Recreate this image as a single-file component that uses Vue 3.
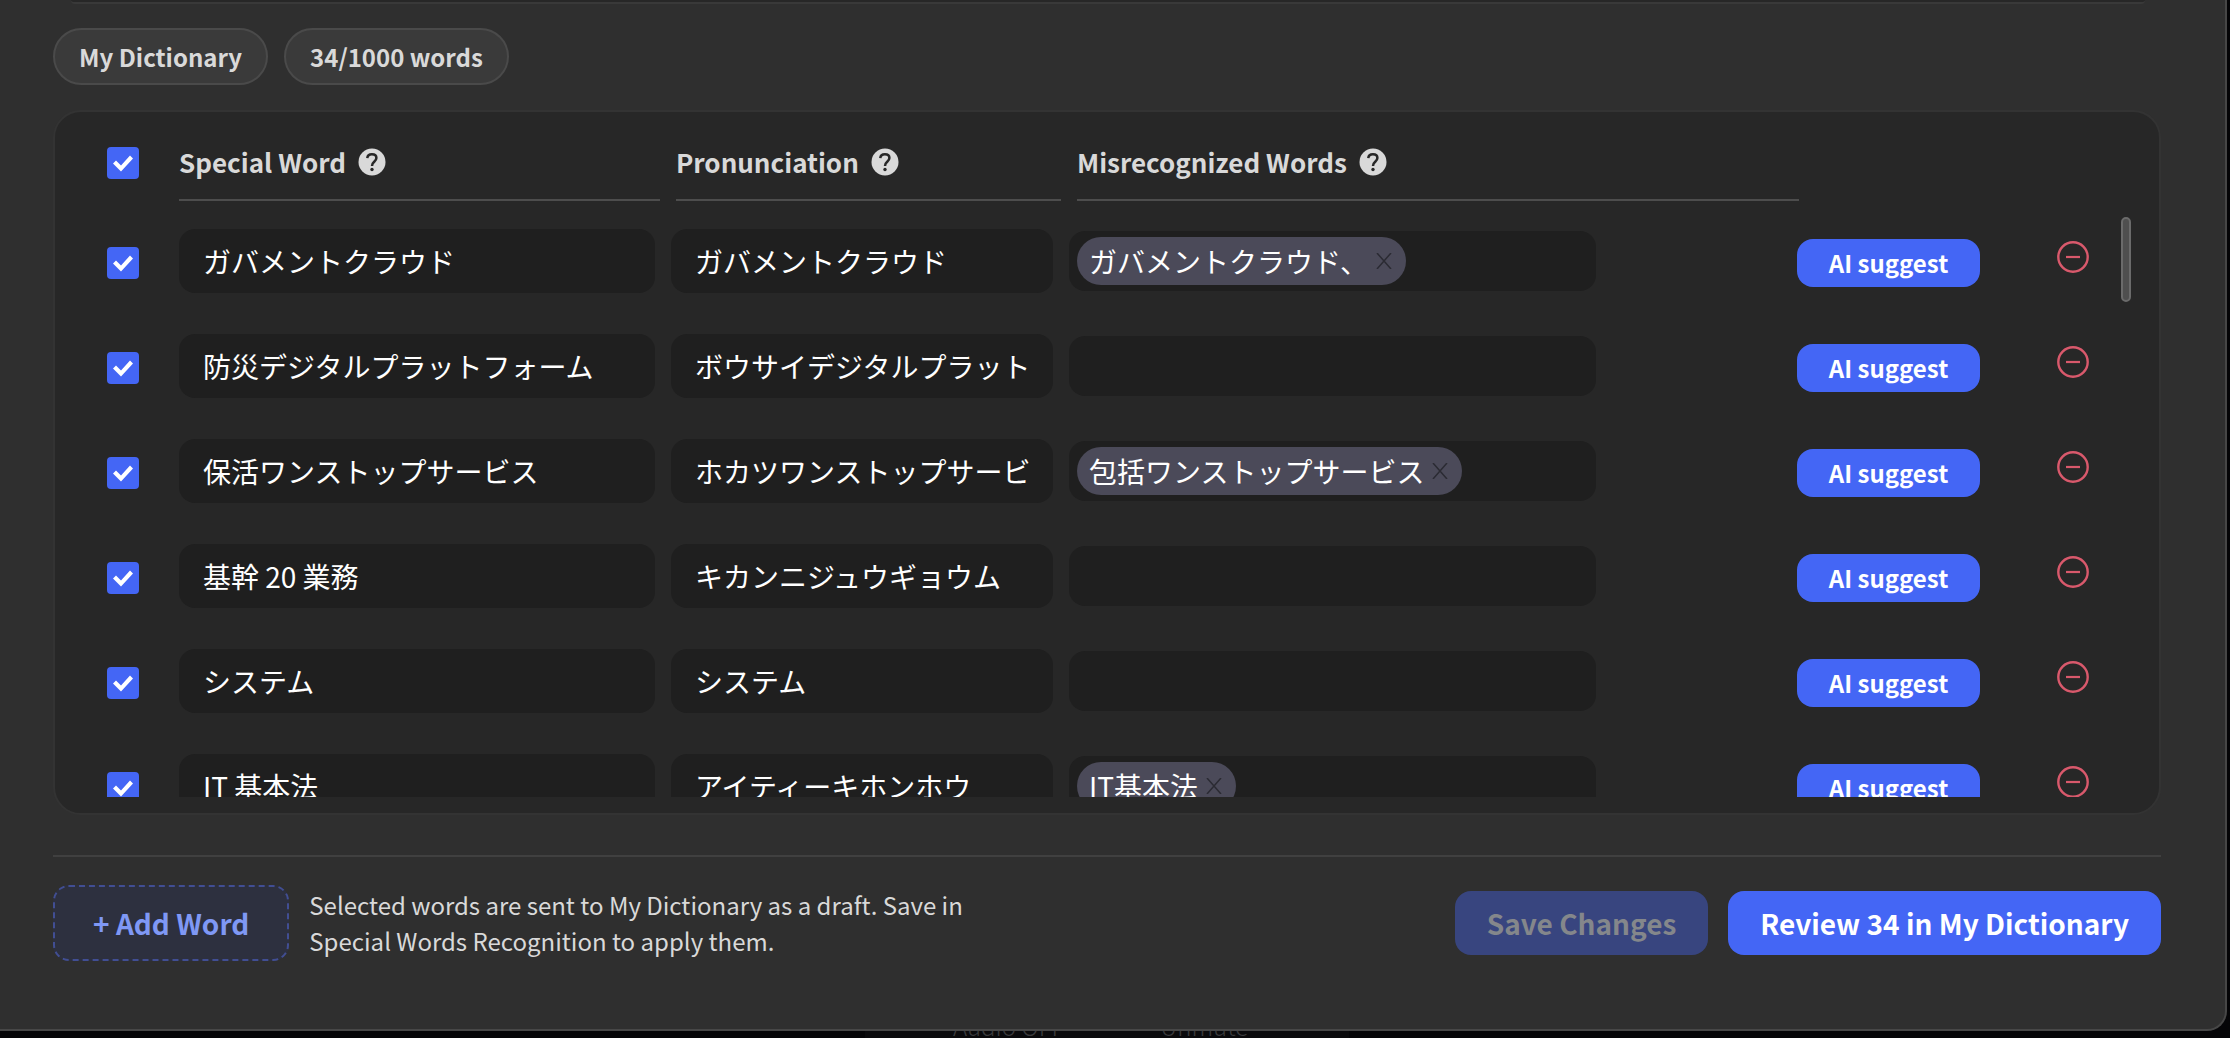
<script setup>
import { ref } from 'vue'

const allSelected = ref(true)

const columns = [
  { key: 'word', label: 'Special Word' },
  { key: 'reading', label: 'Pronunciation' },
  { key: 'mistakes', label: 'Misrecognized Words' },
]

const rows = ref([
  { selected: true, word: 'ガバメントクラウド', reading: 'ガバメントクラウド', tags: ['ガバメントクラウド、'] },
  { selected: true, word: '防災デジタルプラットフォーム', reading: 'ボウサイデジタルプラットフォーム', tags: [] },
  { selected: true, word: '保活ワンストップサービス', reading: 'ホカツワンストップサービス', tags: ['包括ワンストップサービス'] },
  { selected: true, word: '基幹 20 業務', reading: 'キカンニジュウギョウム', tags: [] },
  { selected: true, word: 'システム', reading: 'システム', tags: [] },
  { selected: true, word: 'IT 基本法', reading: 'アイティーキホンホウ', tags: ['IT基本法'] },
])
</script>

<template>
  <div class="page">
    <main class="dialog">
      <div class="previous-panel"></div>

      <div class="pills">
        <span class="pill">My Dictionary</span>
        <span class="pill">34/1000 words</span>
      </div>

      <section class="card">
        <table class="words">
          <thead>
            <tr class="head-row">
              <th class="head-check">
                <input v-model="allSelected" class="check" type="checkbox" aria-label="Select all words" />
              </th>
              <th v-for="column in columns" :key="column.key" class="head-cell" scope="col">
                {{ column.label }}
                <button class="help" type="button" :aria-label="'About ' + column.label">
                  <svg viewBox="0 0 28 28" width="28" height="28" aria-hidden="true">
                    <circle cx="14" cy="14" r="13.5" fill="#d9d9d9" />
                    <path
                      d="M9.300 10.200C9.500 7.700 11.200 6.300 13.900 6.300c2.700 0 4.500 1.500 4.500 3.700 0 1.800-1 2.700-2.200 3.800-1.300 1.100-2.200 2-2.200 4.200"
                      fill="none"
                      stroke="#272727"
                      stroke-width="2.500"
                    />
                    <circle cx="14" cy="21.500" r="1.700" fill="#272727" />
                  </svg>
                </button>
              </th>
            </tr>
          </thead>
          <tbody class="body">
            <tr v-for="(row, index) in rows" :key="index" class="row">
              <td class="cell action">
                <input v-model="row.selected" class="check" type="checkbox" :aria-label="'Select ' + row.word" />
              </td>
              <td class="cell">
                <input v-model="row.word" class="field" type="text" aria-label="Special Word" />
              </td>
              <td class="cell">
                <input v-model="row.reading" class="field" type="text" aria-label="Pronunciation" />
              </td>
              <td class="cell">
                <div class="tags">
                  <span v-for="tag in row.tags" :key="tag" class="tag">
                    {{ tag }}
                    <button class="tag-remove" type="button" :aria-label="'Remove ' + tag">
                      <svg viewBox="0 0 16 16" width="16" height="16" aria-hidden="true">
                        <path d="M1 0l14 16M15 0L1 16" fill="none" stroke="#2b2b33" stroke-width="1.500" />
                      </svg>
                    </button>
                  </span>
                </div>
              </td>
              <td class="cell action">
                <button class="suggest" type="button">AI suggest</button>
              </td>
              <td class="cell delete">
                <button class="remove" type="button" :aria-label="'Delete ' + row.word">
                  <svg viewBox="0 0 32 32" width="32" height="32" aria-hidden="true">
                    <circle cx="16" cy="16" r="14.700" fill="none" stroke="#d9596c" stroke-width="2.400" />
                    <path d="M9 16h14" stroke="#d9596c" stroke-width="2.200" />
                  </svg>
                </button>
              </td>
            </tr>
          </tbody>
        </table>
        <div class="thumb" aria-hidden="true"></div>
      </section>

      <footer class="footer">
        <button class="add" type="button">+ Add Word</button>
        <p class="note">
          Selected words are sent to My Dictionary as a draft. Save in Special Words Recognition to apply them.
        </p>
        <div class="actions">
          <button class="primary" type="button" disabled>Save Changes</button>
          <button class="primary" type="button">Review 34 in My Dictionary</button>
        </div>
      </footer>
    </main>

    <div class="call-bar">
      <div class="call-controls">
        <span>Audio OFF</span>
        <span>Unmute</span>
      </div>
    </div>
  </div>
</template>

<style>
body {
  background: #050507;
}
</style>

<style scoped>
.page {
  overflow: hidden;
  background: #050507;
  color: #d9d9d9;
  font-family: "Noto Sans CJK JP", "Noto Sans", sans-serif;
}

.page *,
.page *::before {
  box-sizing: border-box;
}

button,
input {
  margin: 0;
  font-family: inherit;
}

button {
  padding: 0;
  border: 0;
  background: none;
  cursor: pointer;
}

svg {
  display: block;
}

.dialog {
  margin-right: 3px;
  padding: 0 64px 68px 53px;
  border: solid #474747;
  border-width: 0 2px 2px 0;
  border-radius: 0 0 20px 0;
  background: #2f2f2f;
}

.previous-panel {
  height: 4px;
  margin: 0 16px 0 18px;
  border-bottom: 2px solid #393939;
  border-radius: 0 0 12px 12px;
  background: #272727;
}

.pills {
  display: flex;
  gap: 16px;
  margin: 24px 0 25px;
}

.pill {
  padding: 0 24px;
  border: 2px solid #4a4a4a;
  border-radius: 29px;
  background: #3a3a3a;
  font-size: 24px;
  font-weight: 700;
  line-height: 53px;
}

.card {
  position: relative;
  padding: 16px 0;
  border: 2px solid #333333;
  border-radius: 28px;
  background: #272727;
}

.words {
  display: block;
}

.words thead {
  display: block;
}

.head-row,
.row {
  display: grid;
  column-gap: 16px;
  padding-left: 52px;
}

.head-row {
  grid-template-columns: 56px 481fr 385fr 722fr 344px;
}

.head-check {
  display: flex;
  align-items: center;
  padding: 0 0 4px;
}

.head-cell {
  display: flex;
  align-items: center;
  gap: 12px;
  height: 73px;
  padding: 0 0 4px;
  border-bottom: 2px solid #4d4d4d;
  font-size: 26px;
  font-weight: 700;
  white-space: nowrap;
}

.body {
  display: block;
  max-height: 589px;
  margin-top: 7px;
  overflow-y: auto;
  scrollbar-width: none;
}

.row {
  grid-template-columns: 56px 476fr 382fr 712fr 183px 153px;
  align-items: center;
  height: 105px;
  padding-right: 10px;
}

.cell {
  padding: 0;
}

.action {
  padding-top: 4px;
}

.delete {
  display: flex;
  justify-content: center;
  padding-bottom: 8px;
}

.check {
  display: block;
  width: 32px;
  height: 32px;
  border-radius: 4px;
  appearance: none;
  background: #1f1f1f;
}

.check:checked {
  background: #4466f5;
}

.check:checked::before {
  display: block;
  width: 32px;
  height: 32px;
  background: #ffffff;
  clip-path: polygon(6px 17px, 9px 14px, 14px 19px, 23px 9px, 26px 12px, 14px 25px);
  content: "";
}

.field {
  display: block;
  width: 100%;
  height: 64px;
  padding: 0 24px;
  border: 0;
  border-radius: 16px;
  background: #1f1f1f;
  color: #ffffff;
  font-size: 28px;
}

.tags {
  display: flex;
  align-items: center;
  width: 74%;
  height: 60px;
  padding: 0 8px;
  border-radius: 16px;
  background: #1f1f1f;
}

.tag {
  display: flex;
  align-items: center;
  gap: 8px;
  height: 48px;
  padding: 0 14px 0 12px;
  border-radius: 24px;
  background: #4b4a59;
  color: #ffffff;
  font-size: 28px;
  white-space: nowrap;
}

.suggest {
  display: block;
  width: 100%;
  height: 48px;
  border-radius: 16px;
  background: #4466f5;
  color: #ffffff;
  font-size: 24px;
  font-weight: 700;
}

.thumb {
  position: absolute;
  top: 105px;
  right: 28px;
  width: 10px;
  height: 85px;
  border: 2px solid #6b6b6b;
  border-radius: 5px;
  background: #4f4f4f;
}

.footer {
  display: flex;
  align-items: center;
  margin-top: 40px;
  padding-top: 28px;
  border-top: 2px solid #404040;
}

.add {
  height: 76px;
  padding: 0 38px;
  border: 2px dashed #414e93;
  border-radius: 16px;
  background: #2d303f;
  color: #7f98f5;
  font-size: 28px;
  font-weight: 700;
  white-space: nowrap;
}

.note {
  max-width: 680px;
  margin: 0 auto 0 20px;
  font-size: 24px;
  line-height: 36px;
}

.actions {
  display: flex;
  gap: 20px;
}

.primary {
  height: 64px;
  padding: 0 32px;
  border-radius: 16px;
  background: #4466f5;
  color: #ffffff;
  font-size: 28px;
  font-weight: 700;
  white-space: nowrap;
}

.primary:disabled {
  background: #38457f;
  color: #84878b;
  cursor: default;
}

.call-bar {
  display: flex;
  justify-content: center;
  height: 7px;
  padding-right: 16px;
}

.call-controls {
  display: flex;
  align-items: flex-end;
  gap: 96px;
  width: 484px;
  padding-left: 88px;
  overflow: hidden;
  background: #0a0a0c;
  color: #3a3a3c;
  font-size: 24px;
  font-weight: 300;
  line-height: 24px;
}
</style>
